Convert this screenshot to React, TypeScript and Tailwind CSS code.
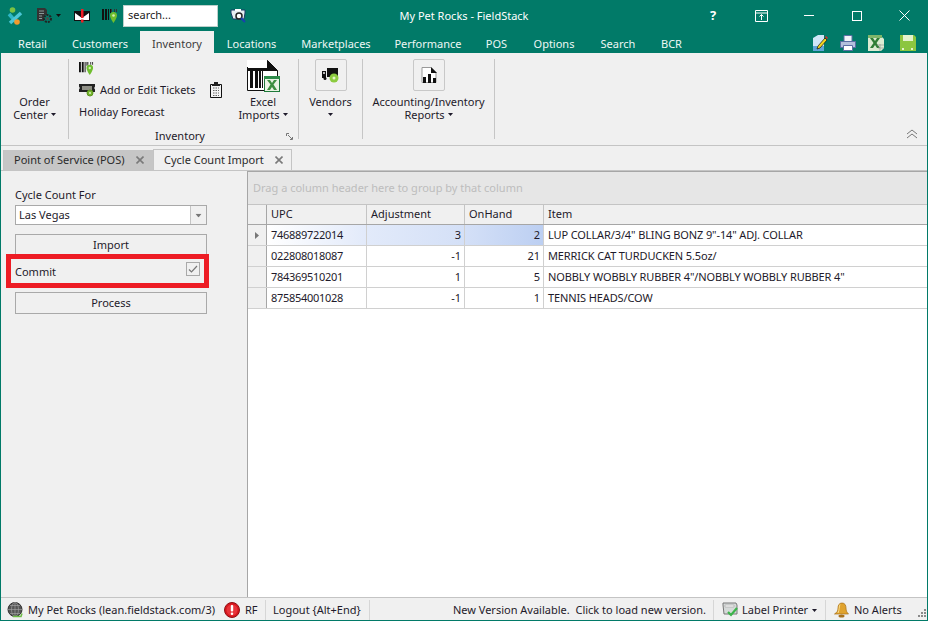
const tabs = [
  { label: "Retail", w: "w-[55px]" },
  { label: "Customers", w: "w-[80px]" },
  { label: "Inventory", w: "w-[74px]", active: true },
  { label: "Locations", w: "w-[75px]" },
  { label: "Marketplaces", w: "w-[94px]" },
  { label: "Performance", w: "w-[90px]" },
  { label: "POS", w: "w-[47px]" },
  { label: "Options", w: "w-[68px]" },
  { label: "Search", w: "w-[60px]" },
  { label: "BCR", w: "w-[47px]" },
];

const rows = [
  { upc: "746889722014", adj: "3", hand: "2", item: 'LUP COLLAR/3/4" BLING BONZ 9"-14" ADJ. COLLAR', selected: true },
  { upc: "022808018087", adj: "-1", hand: "21", item: "MERRICK CAT TURDUCKEN 5.5oz/" },
  { upc: "784369510201", adj: "1", hand: "5", item: 'NOBBLY WOBBLY RUBBER 4"/NOBBLY WOBBLY RUBBER 4"' },
  { upc: "875854001028", adj: "-1", hand: "1", item: "TENNIS HEADS/COW" },
];

function Caret({ className = "" }: { className?: string }) {
  return (
    <svg width="5" height="3" viewBox="0 0 5 3" className={className}>
      <path d="M0 0h5L2.500 3z" fill="currentColor" />
    </svg>
  );
}

function Logo() {
  return (
    <svg width="16" height="18" viewBox="0 0 16 18">
      <path d="M2 7l6.500 7.500" stroke="#2fb7c6" strokeWidth="3.500" fill="none" />
      <path d="M14 6L3 16" stroke="#4cc6d6" strokeWidth="3.500" fill="none" />
      <circle cx="5.500" cy="3" r="2.800" fill="#7cc243" />
      <circle cx="10" cy="15" r="2.800" fill="#f39a2d" />
    </svg>
  );
}

function DocGear() {
  return (
    <svg width="17" height="17" viewBox="0 0 17 17">
      <path d="M1 1h8l2 2v5H8v6H1z" fill="#333" />
      <path d="M3 4h5M3 6.500h5M3 9h3M3 11.500h3" stroke="#8a9a98" />
      <circle cx="11.500" cy="11.500" r="3.500" fill="none" stroke="#222" strokeWidth="2" strokeDasharray="2 1" />
      <circle cx="11.500" cy="11.500" r="1.500" fill="#4a4a4a" />
    </svg>
  );
}

function MailAlert() {
  return (
    <svg width="16" height="14" viewBox="0 0 16 14">
      <path d="M0 2h16v10H0z" fill="#111" />
      <path d="M1 4l7 5 7-5v7H1z" fill="#fff" />
      <rect x="7" y="0" width="2.500" height="9" fill="#ef1c25" />
      <rect x="7" y="10.500" width="2.500" height="3" fill="#ef1c25" />
    </svg>
  );
}

function BarcodePin({ size = 16 }: { size?: number }) {
  return (
    <svg width={size} height={size} viewBox="0 0 16 16">
      <path d="M0 1h2v11H0zM3 1h2v11H3zM6 1h1v11H6zM8 1h1v4H8z" fill="#111" />
      <path d="M9 1h1v3H9zM12 1h1v3h-1zM14 1h1v3h-1z" fill="#333" />
      <path d="M11.500 4a3.500 3.500 0 0 1 3.500 3.500c0 2.500-3.500 7.500-3.500 7.500S8 10 8 7.500A3.500 3.500 0 0 1 11.500 4z" fill="#6fbe2e" />
      <circle cx="11.500" cy="7.500" r="1.300" fill="#d4efb0" />
    </svg>
  );
}

function Binoculars() {
  return (
    <svg width="17" height="16" viewBox="0 0 17 16">
      <path d="M1 2h14v3l-1 6H3L1 5z" fill="#e8eef2" stroke="#1d3a66" />
      <path d="M5 1h6v2H5z" fill="#fff" />
      <circle cx="9" cy="8" r="3" fill="#fff" stroke="#222" strokeWidth="1.500" />
      <path d="M11 10l4 4" stroke="#1a3fb0" strokeWidth="2" />
    </svg>
  );
}

function ExcelBadge({ size = 16 }: { size?: number }) {
  return (
    <svg width={size} height={size} viewBox="0 0 16 16">
      <rect x="0.500" y="0.500" width="15" height="15" fill="#e9f3e3" stroke="#1f7a3a" />
      <path d="M0 0h16v3H0z" fill="#2e8b4a" />
      <path d="M3 4h3l2 3 2-3h3l-3.500 4.500L13 14h-3l-2-3-2 3H3l3.500-5.500z" fill="#3d8f3f" />
    </svg>
  );
}

function ExcelSheet() {
  return (
    <svg width="16" height="16" viewBox="0 0 16 16">
      <path d="M0 0h14v2l2 2v9l-3 3H0z" fill="#dcebd2" />
      <path d="M0 0h14v3H0z" fill="#7fb56a" />
      <path d="M2 3h3l2 3 2-3h3L8.500 8 12 13H9L7 10l-2 3H2l3.500-5z" fill="#2f7d36" />
      <path d="M9 10h7M10 13h6M12 9v7" stroke="#9a9a9a" strokeWidth="0.700" />
    </svg>
  );
}

function ExcelImport() {
  return (
    <div className="relative h-[33px] w-[33px]">
      <svg width="31" height="31" viewBox="0 0 31 31">
        <path d="M0.500 0.500h20l10 10v20H0.500z" fill="#fff" stroke="#111" />
        <path d="M20 0l11 11H20z" fill="#111" />
        <path d="M0 0h20v7H0z" fill="#fff" />
        <path d="M0 8h20v3H0zM3 11h3v17H3zM8 11h3v17H8zM12 11h2v17h-2zM15 11h1v17h-1z" fill="#111" />
      </svg>
      <div className="absolute bottom-[1px] right-0">
        <ExcelBadge />
      </div>
    </div>
  );
}

function TicketGear() {
  return (
    <svg width="16" height="14" viewBox="0 0 16 14">
      <path d="M0 1h16v2.500a2 2 0 0 0 0 3V9H0V6.500a2 2 0 0 0 0-3z" fill="#222" />
      <path d="M3 3h10v4H3z" fill="#8f8f86" />
      <circle cx="11" cy="10" r="3" fill="#73b52c" stroke="#5d9320" />
      <circle cx="11" cy="10" r="1" fill="#e0f0c0" />
    </svg>
  );
}

function Clipboard() {
  return (
    <svg width="12" height="16" viewBox="0 0 12 16">
      <path d="M0.500 2.500h11v13H0.500z" fill="#f4f4f4" stroke="#111" />
      <path d="M4 0h4v2h2v2H2V2h2z" fill="#222" />
      <path d="M3 6h6M3 8.500h6M3 11h6M3 13.500h6" stroke="#666" strokeDasharray="1.500 1" />
    </svg>
  );
}

function Truck() {
  return (
    <svg width="18" height="17" viewBox="0 0 18 17">
      <path d="M5 1h11v9H5z" fill="#111" />
      <path d="M0 4h4v7H0z" fill="#111" />
      <path d="M1 5h2v2H1z" fill="#bbb" />
      <circle cx="3" cy="11.500" r="1.500" fill="#111" />
      <circle cx="12" cy="11" r="4.500" fill="#8ccb3f" />
      <circle cx="12" cy="11" r="1.500" fill="#e4f4c8" />
    </svg>
  );
}

function ReportChart() {
  return (
    <svg width="16" height="16" viewBox="0 0 16 16">
      <path d="M1 .500h9l5 5v10H1z" fill="#fff" stroke="#999" />
      <path d="M10 0l6 6h-6z" fill="#111" />
      <path d="M2 10h3v6H2zM7 7h3v9H7zM12 11h3v5h-3z" fill="#111" />
    </svg>
  );
}

function NotePencil() {
  return (
    <svg width="16" height="16" viewBox="0 0 16 16">
      <path d="M1 3l5-3h6v16H1z" fill="#cfe6f7" />
      <path d="M1 11h11v5H1z" fill="#5fa5d8" />
      <path d="M6 11l7-8 2 2-7 8-3 1z" fill="#f5d51f" stroke="#111" strokeWidth="0.700" />
      <path d="M13 2l1-1 2 2-1 1z" fill="#d92b2b" />
    </svg>
  );
}

function Printer() {
  return (
    <svg width="16" height="16" viewBox="0 0 16 16">
      <path d="M4 0.500h8v6H4z" fill="#f1f3f8" stroke="#5a6fa3" />
      <path d="M0.500 6.500h15v6h-15z" fill="#b3c0dc" stroke="#5a6fa3" />
      <path d="M3.500 10.500h9v5h-9z" fill="#fff" stroke="#5a6fa3" />
    </svg>
  );
}

function Floppy() {
  return (
    <svg width="16" height="16" viewBox="0 0 16 16">
      <path d="M0 0h14l2 2v14H0z" fill="#8cc63f" />
      <path d="M3 0h10v6H3z" fill="#e4f3cd" />
      <path d="M4 11h8v5H4z" fill="#8cc63f" />
      <path d="M2 13h2v2H2zM11 13h2v2h-2z" fill="#e4f3cd" />
    </svg>
  );
}

function Globe() {
  return (
    <svg width="16" height="16" viewBox="0 0 16 16">
      <circle cx="8" cy="7.500" r="7" fill="#555" stroke="#333" />
      <path d="M1 7.500h14M8 .500v14M3 3.500h10M3 11.500h10" stroke="#aaa" strokeWidth="0.600" fill="none" />
      <ellipse cx="8" cy="7.500" rx="3.500" ry="7" stroke="#aaa" strokeWidth="0.600" fill="none" />
      <path d="M6 14.500h8l1-3" stroke="#6dbb45" strokeWidth="1.500" fill="none" />
    </svg>
  );
}

function AlertDot() {
  return (
    <svg width="16" height="16" viewBox="0 0 16 16">
      <circle cx="8" cy="8" r="7.500" fill="#d8181f" stroke="#8f1014" />
      <circle cx="8" cy="8" r="5.500" fill="#e8343a" />
      <rect x="6.800" y="3" width="2.400" height="6.500" rx="1" fill="#fff" />
      <rect x="6.800" y="10.500" width="2.400" height="2.400" rx="1" fill="#fff" />
    </svg>
  );
}

function LabelPrinter() {
  return (
    <svg width="17" height="16" viewBox="0 0 17 16">
      <path d="M1 1h13l1 2v9H2L1 3z" fill="#d5d9d8" stroke="#777" />
      <path d="M3 3h9v2H3z" fill="#f4f4f4" stroke="#999" strokeWidth="0.500" />
      <path d="M6 10l3 3 6-7" stroke="#3bb54a" strokeWidth="2.200" fill="none" />
    </svg>
  );
}

function Bell() {
  return (
    <svg width="15" height="16" viewBox="0 0 15 16">
      <path d="M8 1c3 0 4 2.500 4 5 0 3 1 4.500 2.500 6H.5C3 10.500 4 9 4 6c0-2.500 1-5 4-5z" fill="#e0a32e" stroke="#a8701a" strokeWidth="0.700" />
      <path d="M6 2.500C5 4 5.500 8 4 11" stroke="#f8dc8c" fill="none" />
      <ellipse cx="7.500" cy="14" rx="3" ry="1.500" fill="#a8701a" />
    </svg>
  );
}

function RibbonSep() {
  return <div className="mt-[6px] h-[80px] w-px shrink-0 bg-[#c6c6c6]" />;
}

function StatusSep() {
  return <div className="h-[20px] w-px shrink-0 bg-[#d6d6d6]" />;
}

function IconBox({ children }: { children: React.ReactNode }) {
  return (
    <div className="flex h-[32px] w-[32px] items-center justify-center rounded-[2px] border border-[#c8c8c8] bg-[#f0f0f0]">
      {children}
    </div>
  );
}

function TitleBar() {
  return (
    <div className="grid h-[31px] shrink-0 grid-cols-[1fr_auto_1fr] items-center text-white">
      <div className="flex items-center">
        <div className="ml-[7px] w-[16px]"><Logo /></div>
        <div className="ml-[13px]"><DocGear /></div>
        <Caret className="ml-[3px] text-[#111]" />
        <div className="ml-[13px]"><MailAlert /></div>
        <div className="ml-[12px]"><BarcodePin /></div>
        <div className="ml-[5px] flex h-[22px] w-[95px] items-center border border-[#bcd0cb] bg-white px-[4px] text-[#222]">search...</div>
        <div className="ml-[12px]"><Binoculars /></div>
      </div>
      <div className="pt-[1px] text-center">My Pet Rocks - FieldStack</div>
      <div className="flex h-[31px] justify-end">
        <div className="flex w-[48px] items-center justify-center text-[13px] font-bold">?</div>
        <div className="flex w-[48px] items-center justify-center">
          <svg width="13" height="12" viewBox="0 0 13 12" fill="none" stroke="#fff">
            <path d="M.5.500h12v11H.5zM.5 3h12M6.500 10V4.500M4.500 6.500l2-2 2 2" />
          </svg>
        </div>
        <div className="flex w-[48px] items-center justify-center">
          <div className="h-px w-[10px] bg-white" />
        </div>
        <div className="flex w-[47px] items-center justify-center">
          <div className="h-[10px] w-[10px] border border-white" />
        </div>
        <div className="flex w-[48px] items-center justify-center">
          <svg width="11" height="11" viewBox="0 0 11 11" stroke="#fff" fill="none">
            <path d="M.5.500l10 10M10.500.500l-10 10" />
          </svg>
        </div>
      </div>
    </div>
  );
}

function TabRow() {
  return (
    <div className="flex h-[22px] shrink-0 items-stretch pl-[5px]">
      {tabs.map((t) => (
        <div
          key={t.label}
          className={
            t.active
              ? `${t.w} flex items-center justify-center bg-[#f0f0f0] pt-[4px] text-[#3c3c3c]`
              : `${t.w} flex items-center justify-center pt-[4px] text-[#eef7f5]`
          }
        >
          {t.label}
        </div>
      ))}
      <div className="ml-[117px] flex items-center gap-[12px] pt-[1px]">
        <NotePencil />
        <Printer />
        <ExcelSheet />
        <div className="ml-[4px]"><Floppy /></div>
      </div>
    </div>
  );
}

function Ribbon() {
  return (
    <div className="relative flex h-[93px] shrink-0 border-b border-[#c4c4c4] bg-[#f0f0f0] text-[#1e1a2a]">
      <div className="flex w-[67px] shrink-0 flex-col items-center pt-[42px] leading-[13px]">
        <div>Order</div>
        <div className="flex items-center gap-[3px]">Center <Caret /></div>
      </div>
      <RibbonSep />

      <div className="relative flex h-[92px] w-[229px] shrink-0">
        <div className="ml-[10px] w-[131px] pt-[4px]">
          <div className="flex h-[22px] items-center"><BarcodePin size={15} /></div>
          <div className="flex h-[22px] items-center gap-[5px]"><TicketGear /> Add or Edit Tickets</div>
          <div className="flex h-[22px] items-center">Holiday Forecast</div>
        </div>
        <div className="flex h-[45px] items-end"><Clipboard /></div>
        <div className="ml-[10px] flex w-[62px] flex-col items-center pt-[7px] leading-[13px]">
          <ExcelImport />
          <div className="mt-[2px]">Excel</div>
          <div className="flex items-center gap-[3px]">Imports <Caret /></div>
        </div>
        <div className="absolute bottom-[1px] left-0 w-[222px] text-center">Inventory</div>
        <svg className="absolute bottom-[5px] right-[5px]" width="7" height="7" viewBox="0 0 7 7" fill="none" stroke="#777">
          <path d="M6.500 4v2.500H4M.5 3V.500H3M2 2l4 4" />
        </svg>
      </div>
      <RibbonSep />

      <div className="flex w-[63px] shrink-0 flex-col items-center pt-[6px] leading-[13px]">
        <IconBox><Truck /></IconBox>
        <div className="mt-[4px]">Vendors</div>
        <Caret className="mt-[5px]" />
      </div>
      <RibbonSep />

      <div className="flex w-[131px] shrink-0 flex-col items-center pt-[6px] leading-[13px]">
        <IconBox><ReportChart /></IconBox>
        <div className="mt-[4px]">Accounting/Inventory</div>
        <div className="flex items-center gap-[3px]">Reports <Caret /></div>
      </div>
      <RibbonSep />

      <svg className="absolute bottom-[6px] right-[9px]" width="12" height="10" viewBox="0 0 12 10" fill="none" stroke="#777">
        <path d="M1 5l5-4 5 4M1 9l5-4 5 4" />
      </svg>
    </div>
  );
}

function XMark() {
  return (
    <svg width="8" height="8" viewBox="0 0 8 8" stroke="#7a7a7a" strokeWidth="1.600" fill="none">
      <path d="M.5.500l7 7M7.500.500l-7 7" />
    </svg>
  );
}

function DocTabs() {
  return (
    <div className="flex h-[25px] shrink-0 items-end border-b border-[#c4c4c4] bg-[#f0f0f0] pl-[2px] text-[#2a2a2a]">
      <div className="flex h-[20px] w-[150px] items-center justify-between border-l border-[#c4c4c4] bg-[#c6c6c6] pl-[10px] pr-[9px]">
        <span>Point of Service (POS)</span>
        <XMark />
      </div>
      <div className="flex h-[21px] w-[139px] items-center justify-between border-x border-t border-[#c4c4c4] bg-[#f0f0f0] pl-[10px] pr-[8px]">
        <span>Cycle Count Import</span>
        <XMark />
      </div>
    </div>
  );
}

function LeftPanel() {
  return (
    <div className="relative w-[246px] shrink-0 bg-[#f0f0f0] pl-[14px] pt-[16px] text-[#1e1a2a]">
      <div className="h-[15px] leading-[15px]">Cycle Count For</div>
      <div className="mt-[3px] flex h-[20px] w-[192px] items-stretch border border-[#a9a9a9] bg-white">
        <div className="flex flex-1 items-center pl-[3px]">Las Vegas</div>
        <div className="flex w-[16px] items-center justify-center border-l border-[#c4c4c4] bg-[#f0f0f0]">
          <Caret className="scale-125 text-[#777]" />
        </div>
      </div>
      <button className="mt-[9px] flex h-[22px] w-[192px] items-center justify-center border border-[#a9a9a9]">Import</button>
      <div className="mt-[3px] flex h-[26px] w-[192px] items-center justify-between pr-[7px]">
        <span>Commit</span>
        <div className="mb-[6px] flex h-[14px] w-[14px] items-center justify-center border border-[#a9a9a9] bg-[#f0f0f0]">
          <svg width="10" height="9" viewBox="0 0 10 9" fill="none" stroke="#777" strokeWidth="1.200">
            <path d="M1 4.500l2.500 2.500L9 1" />
          </svg>
        </div>
      </div>
      <button className="mt-[7px] flex h-[22px] w-[192px] items-center justify-center border border-[#a9a9a9]">Process</button>
      <div className="absolute left-[5px] top-[83px] h-[34px] w-[203px] border-[5px] border-[#ed1c24]" />
    </div>
  );
}

const gridCols = "grid grid-cols-[19px_100px_98px_79px_1fr]";

function DataGrid() {
  return (
    <div className="min-w-0 flex-1 border-l border-t border-[#a6a6a6] bg-white text-[#1e1a2a]">
      <div className="flex h-[33px] items-center border-b border-[#c4c4c4] bg-[#e6e6e6] pl-[5px] pt-[1px] text-[#bdbdbd]">
        Drag a column header here to group by that column
      </div>
      <div className={`${gridCols} h-[20px] border-b border-[#a6a6a6] bg-[#f0f0f0]`}>
        <div className="border-r border-[#a6a6a6]" />
        <div className="flex items-center border-r border-[#c4c4c4] pl-[4px]">UPC</div>
        <div className="flex items-center border-r border-[#c4c4c4] pl-[4px]">Adjustment</div>
        <div className="flex items-center border-r border-[#c4c4c4] pl-[4px]">OnHand</div>
        <div className="flex items-center pl-[4px]">Item</div>
      </div>
      {rows.map((r) => (
        <div key={r.upc} className={`${gridCols} h-[21px] border-b border-[#d0d0d0]`}>
          <div className="flex items-center justify-center border-r border-[#a6a6a6] bg-[#f0f0f0]">
            {r.selected && (
              <svg width="4" height="7" viewBox="0 0 4 7"><path d="M0 0l4 3.500L0 7z" fill="#777" /></svg>
            )}
          </div>
          <div className={`flex items-center border-r border-[#d0d0d0] pl-[4px] tracking-[-0.3px] ${r.selected ? "bg-[linear-gradient(90deg,#ffffff,#e2eafa)]" : ""}`}>
            {r.upc}
          </div>
          <div className={`flex items-center justify-end border-r border-[#d0d0d0] pr-[3px] ${r.selected ? "bg-[linear-gradient(90deg,#e2eafa,#d4e0f7)]" : ""}`}>
            {r.adj}
          </div>
          <div className={`flex items-center justify-end border-r border-[#d0d0d0] pr-[3px] ${r.selected ? "bg-[linear-gradient(90deg,#d4e0f7,#bccff2)]" : ""}`}>
            {r.hand}
          </div>
          <div className="flex items-center pl-[4px] tracking-[-0.12px]">{r.item}</div>
        </div>
      ))}
    </div>
  );
}

function StatusBar() {
  return (
    <div className="flex h-[23px] shrink-0 items-center border-t border-[#c4c4c4] bg-[#f0f0f0] pt-[2px] text-[#1e1a2a]">
      <div className="ml-[6px]"><Globe /></div>
      <div className="ml-[5px] w-[188px] whitespace-nowrap">My Pet Rocks (lean.fieldstack.com/3)</div>
      <div className="ml-[8px]"><AlertDot /></div>
      <div className="ml-[5px] w-[20px]">RF</div>
      <StatusSep />
      <div className="ml-[7px] w-[96px] whitespace-nowrap">{"Logout {Alt+End}"}</div>
      <StatusSep />
      <div className="w-[343px] whitespace-pre pr-[7px] text-right">New Version Available.  Click to load new version.</div>
      <StatusSep />
      <div className="ml-[8px]"><LabelPrinter /></div>
      <div className="ml-[3px] flex w-[83px] items-center gap-[4px]">Label Printer <Caret /></div>
      <StatusSep />
      <div className="ml-[8px]"><Bell /></div>
      <div className="ml-[5px] whitespace-nowrap">No Alerts</div>
      <svg className="ml-auto mr-[1px] mt-[6px]" width="8" height="8" viewBox="0 0 8 8" fill="#8a8a8a">
        <path d="M6 0h2v2H6zM3 3h2v2H3zM6 3h2v2H6zM0 6h2v2H0zM3 6h2v2H3zM6 6h2v2H6z" />
      </svg>
    </div>
  );
}

export default function App() {
  return (
    <div className="flex h-[621px] w-[928px] flex-col overflow-hidden bg-[#017a68] text-[11px] [font-family:'Noto_Sans',sans-serif]">
      <TitleBar />
      <TabRow />
      <div className="mx-[1px] mb-[1px] flex min-h-0 flex-1 flex-col bg-[#f0f0f0]">
        <Ribbon />
        <DocTabs />
        <div className="flex min-h-0 flex-1">
          <LeftPanel />
          <DataGrid />
        </div>
        <StatusBar />
      </div>
    </div>
  );
}
